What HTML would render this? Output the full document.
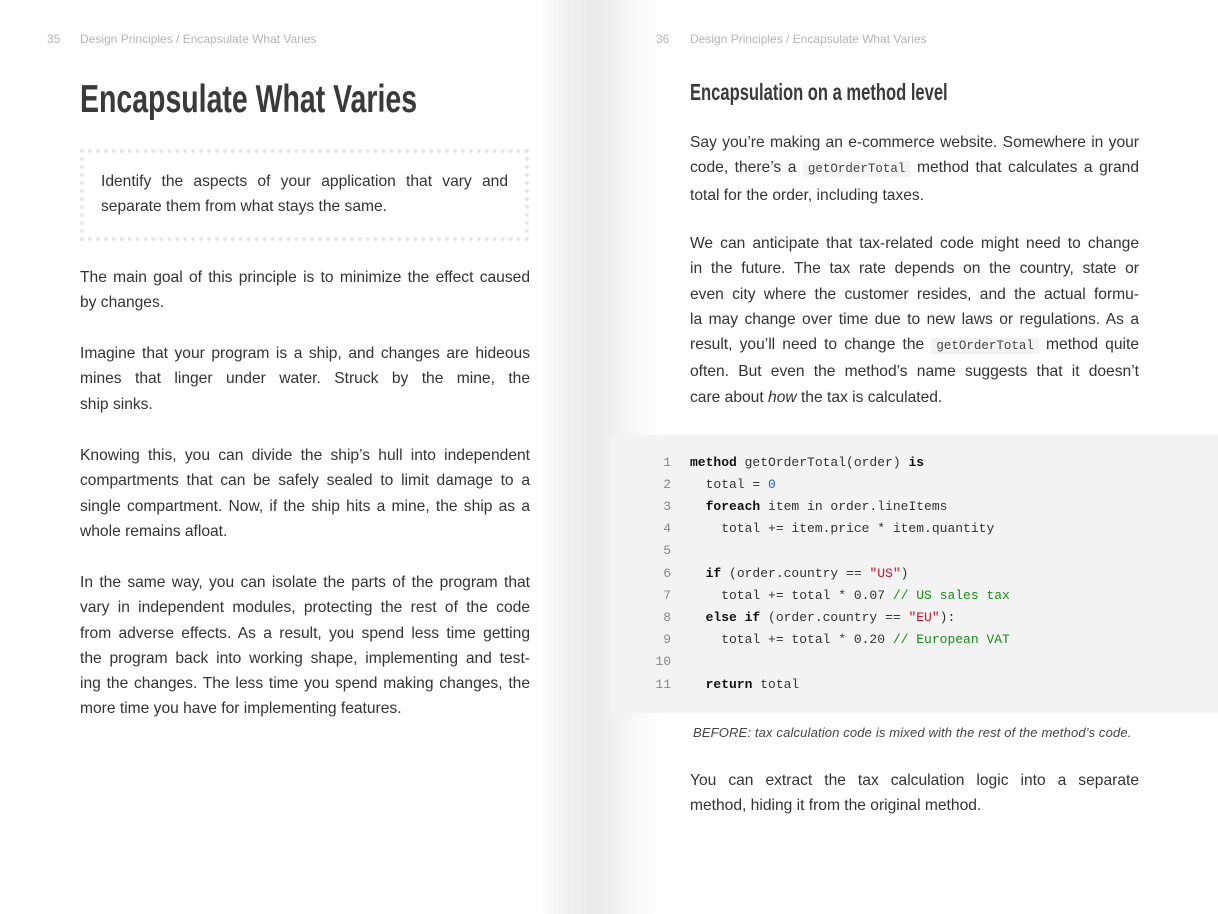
<!DOCTYPE html>
<html><head><meta charset="utf-8"><style>
*{margin:0;padding:0;box-sizing:border-box}
body{width:1218px;height:914px;position:relative;background:#fff;font-family:"Liberation Sans",sans-serif;color:#333;overflow:hidden}
.shade{position:absolute;left:540px;top:0;width:120px;height:914px;background:linear-gradient(to right,#fff 0%,#f2f2f2 20%,#e9e9e9 45%,#f6f6f6 75%,#fff 100%)}
.hdr{position:absolute;top:32px;font-size:12px;color:#b5b5b5}
.p{position:absolute;font-size:15.6px;line-height:25.3px;text-align:justify;color:#333}
.p .l{display:block;text-align:justify;text-align-last:justify;white-space:nowrap}
.p .e{display:block;white-space:nowrap}
h1{position:absolute;left:80px;top:78px;font-size:39px;font-weight:bold;color:#3a3a3a;transform:scaleX(0.73);transform-origin:0 0;white-space:nowrap;letter-spacing:0}
h2{position:absolute;left:690px;top:79px;font-size:23px;font-weight:bold;color:#3a3a3a;transform:scaleX(0.72);transform-origin:0 0;white-space:nowrap}
.box{position:absolute;left:80px;top:149px;width:449px;height:92px;border:4px dotted #e6e6e6}
code{font-family:"Liberation Mono",monospace;font-size:12.5px;background:#f3f3f3;padding:1px 5px;color:#444}
.code{position:absolute;left:609px;top:435px;width:609px;height:278px;background:#f3f3f3}
.cl{position:absolute;left:0;font-family:"Liberation Mono",monospace;font-size:13px;white-space:pre;color:#333}
.n{position:absolute;width:62px;text-align:right;color:#888}
.t{position:absolute;left:81px}
b{font-weight:bold;color:#111}
.s{color:#c8102e}.c{color:#1a8a1a}.num{color:#1a5fb4}
.cap{position:absolute;left:693px;top:725px;font-size:13px;font-style:italic;color:#444;white-space:nowrap;letter-spacing:0.15px}
</style></head><body>
<div class="shade"></div>
<div class="hdr" style="left:47px">35</div>
<div class="hdr" style="left:80px">Design Principles / Encapsulate What Varies</div>
<div class="hdr" style="left:656px">36</div>
<div class="hdr" style="left:690px">Design Principles / Encapsulate What Varies</div>

<h1>Encapsulate What Varies</h1>
<div class="box"></div>
<div class="p" style="left:101px;top:169px;width:407px"><span class="l">Identify the aspects of your application that vary and</span><span class="e">separate them from what stays the same.</span></div>

<div class="p" style="left:80px;top:265px;width:450px"><span class="l">The main goal of this principle is to minimize the effect caused</span><span class="e">by changes.</span></div>
<div class="p" style="left:80px;top:341px;width:450px"><span class="l">Imagine that your program is a ship, and changes are hideous</span><span class="l">mines that linger under water. Struck by the mine, the</span><span class="e">ship sinks.</span></div>
<div class="p" style="left:80px;top:443px;width:450px"><span class="l">Knowing this, you can divide the ship’s hull into independent</span><span class="l">compartments that can be safely sealed to limit damage to a</span><span class="l">single compartment. Now, if the ship hits a mine, the ship as a</span><span class="e">whole remains afloat.</span></div>
<div class="p" style="left:80px;top:570px;width:450px"><span class="l">In the same way, you can isolate the parts of the program that</span><span class="l">vary in independent modules, protecting the rest of the code</span><span class="l">from adverse effects. As a result, you spend less time getting</span><span class="l">the program back into working shape, implementing and test-</span><span class="l">ing the changes. The less time you spend making changes, the</span><span class="e">more time you have for implementing features.</span></div>

<h2>Encapsulation on a method level</h2>
<div class="p" style="left:690px;top:130px;width:449px"><span class="l">Say you’re making an e-commerce website. Somewhere in your</span><span class="l">code, there’s a <code>getOrderTotal</code> method that calculates a grand</span><span class="e">total for the order, including taxes.</span></div>
<div class="p" style="left:690px;top:231px;width:449px"><span class="l">We can anticipate that tax-related code might need to change</span><span class="l">in the future. The tax rate depends on the country, state or</span><span class="l">even city where the customer resides, and the actual formu-</span><span class="l">la may change over time due to new laws or regulations. As a</span><span class="l">result, you’ll need to change the <code>getOrderTotal</code> method quite</span><span class="l">often. But even the method’s name suggests that it doesn’t</span><span class="e">care about <i>how</i> the tax is calculated.</span></div>

<div class="code">
<div class="cl" style="top:20px"><span class="n">1</span><span class="t"><b>method</b> getOrderTotal(order) <b>is</b></span></div>
<div class="cl" style="top:42px"><span class="n">2</span><span class="t">  total = <span class="num">0</span></span></div>
<div class="cl" style="top:64px"><span class="n">3</span><span class="t">  <b>foreach</b> item in order.lineItems</span></div>
<div class="cl" style="top:86px"><span class="n">4</span><span class="t">    total += item.price * item.quantity</span></div>
<div class="cl" style="top:108px"><span class="n">5</span></div>
<div class="cl" style="top:131px"><span class="n">6</span><span class="t">  <b>if</b> (order.country == <span class="s">"US"</span>)</span></div>
<div class="cl" style="top:153px"><span class="n">7</span><span class="t">    total += total * 0.07 <span class="c">// US sales tax</span></span></div>
<div class="cl" style="top:175px"><span class="n">8</span><span class="t">  <b>else if</b> (order.country == <span class="s">"EU"</span>):</span></div>
<div class="cl" style="top:197px"><span class="n">9</span><span class="t">    total += total * 0.20 <span class="c">// European VAT</span></span></div>
<div class="cl" style="top:219px"><span class="n">10</span></div>
<div class="cl" style="top:242px"><span class="n">11</span><span class="t">  <b>return</b> total</span></div>
</div>
<div class="cap">BEFORE: tax calculation code is mixed with the rest of the method’s code.</div>

<div class="p" style="left:690px;top:768px;width:449px"><span class="l">You can extract the tax calculation logic into a separate</span><span class="e">method, hiding it from the original method.</span></div>
</body></html>
